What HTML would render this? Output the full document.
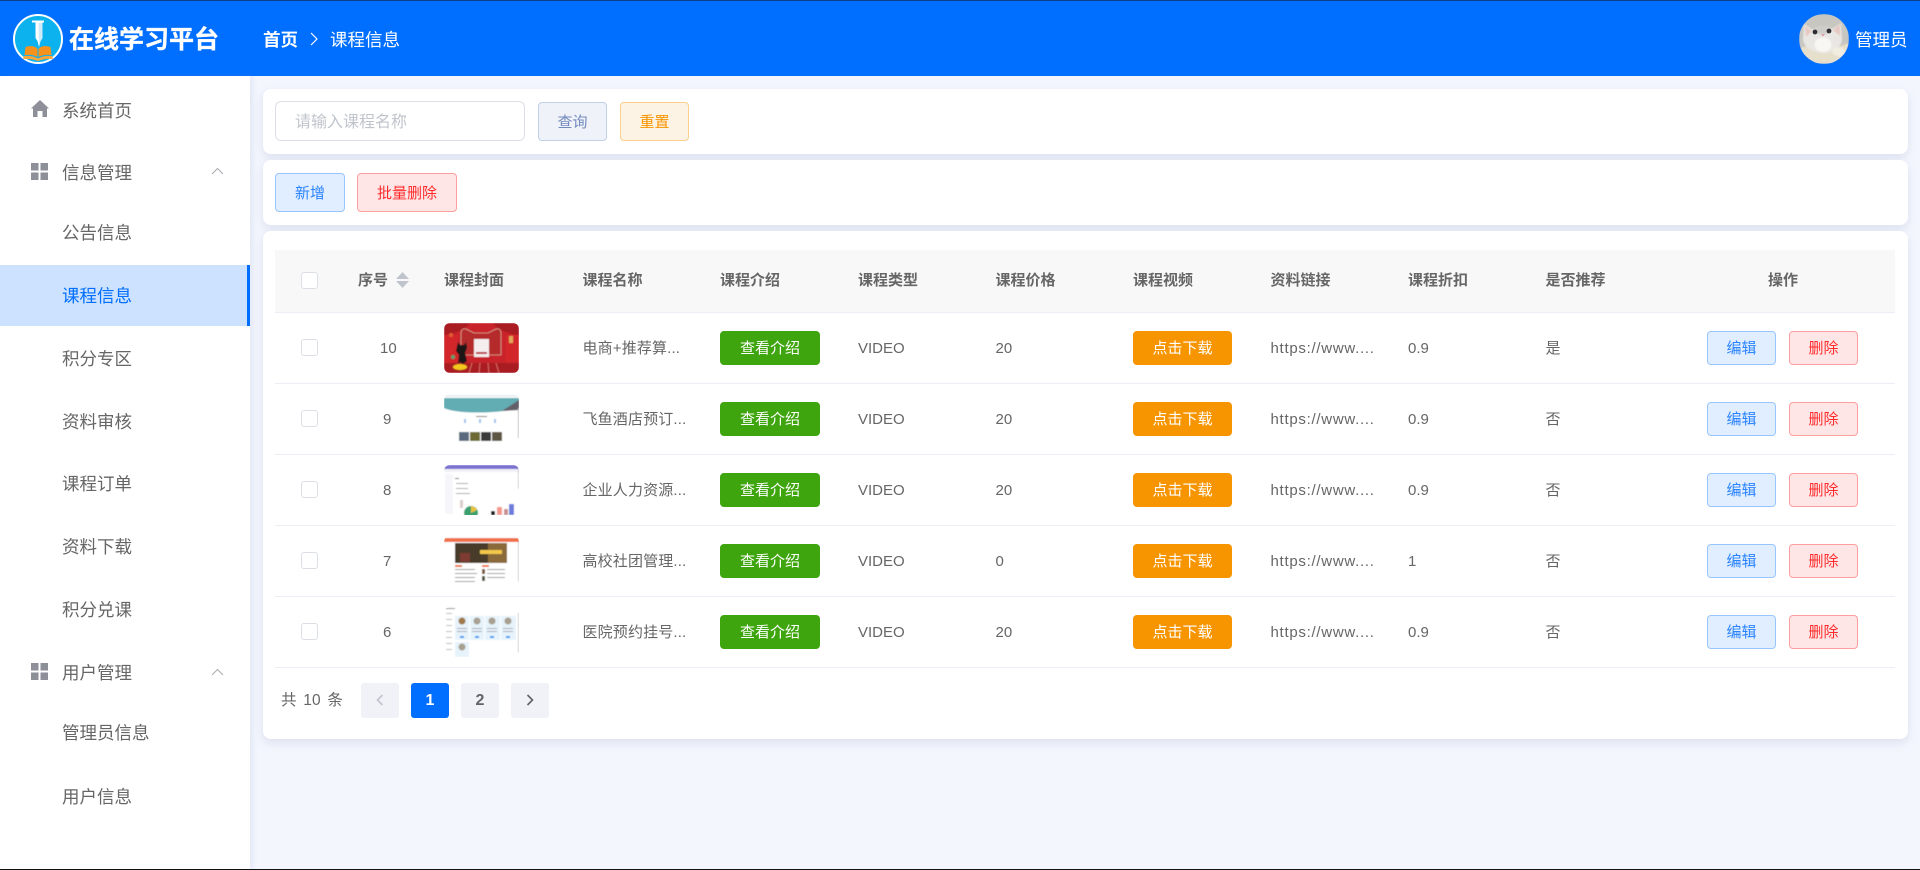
<!DOCTYPE html>
<html lang="zh-CN"><head><meta charset="utf-8"><title>在线学习平台</title>
<style>
*{box-sizing:border-box;margin:0;padding:0}
html,body{width:1920px;height:870px;overflow:hidden;background:#f3f6fd;font-family:"Liberation Sans","Noto Sans CJK SC",sans-serif;color:#606266}
.a{position:absolute;white-space:nowrap}
#hd{position:absolute;left:0;top:0;width:1920px;height:76px;background:#006fff;border-top:1px solid #0b3f86}
#sb{position:absolute;left:0;top:76px;width:250px;height:793px;background:#fff;box-shadow:2px 0 6px rgba(120,130,190,.15)}
.m{position:absolute;left:0;width:250px;height:24px;line-height:26px;font-size:17.5px;color:#666;white-space:nowrap}
.card{position:absolute;left:263px;width:1645px;background:#fff;border-radius:8px;box-shadow:0 4px 10px rgba(110,120,170,.16)}
.btn{position:absolute;text-align:center;border:1px solid;border-radius:4px;font-size:15px;white-space:nowrap}
.th{position:absolute;top:269px;height:24px;line-height:24px;font-size:15px;font-weight:700;color:#666;white-space:nowrap}
.td{position:absolute;height:24px;line-height:26px;font-size:15px;color:#666;white-space:nowrap}
.u{letter-spacing:.72px}
.n{letter-spacing:.15px}
.cb{position:absolute;left:301px;width:17px;height:17px;background:#fff;border:1px solid #dcdfe6;border-radius:3px}
.ln{position:absolute;left:275px;width:1620px;height:1px;background:#ebeef5}
.g{left:720px;width:100px;height:34px;line-height:34px;background:#3fa50e;border-color:#3fa50e;color:#fff}
.o{left:1133px;width:99px;height:34px;line-height:34px;background:#f79500;border-color:#f79500;color:#fff}
.e{left:1707px;width:69px;height:34px;line-height:34px;background:#e1eeff;border-color:#99c5ff;color:#2b84ff}
.d{left:1789px;width:69px;height:34px;line-height:34px;background:#ffe6e6;border-color:#ff9e9e;color:#ff2a2a}
.p{position:absolute;top:683px;width:38px;height:35px;border-radius:3px;background:#f0f2f7;text-align:center;line-height:35px;font-size:16px;font-weight:700;color:#606266}
.t{position:absolute;left:444px;width:75px;height:50px;border-radius:6px;overflow:hidden;display:block}
</style></head><body>

<div id="hd"></div>
<svg class="a" style="left:13px;top:14px" width="50" height="50" viewBox="0 0 50 50">
<circle cx="25" cy="25" r="24" fill="#0cb2ee" stroke="#fff" stroke-width="2"/>
<path d="M19 6.500h12v2h-1.500V24l-2 3-1.500 6-1.500-6-2-3V8.500H19z" fill="#fff"/>
<path d="M25.500 9h4v15l-2 3-1.500 6z" fill="#cfeaf8"/>
<path d="M12.500 33c5-1.500 10-1 12 2v8c-3-2-8-2.500-13-2z" fill="#f5921e"/>
<path d="M37.500 33c-5-1.500-10-1-12 2v8c3-2 8-2.500 13-2z" fill="#f5921e"/>
<path d="M11 42c5-.5 10 0 14 2.500 4-2.500 9-3 14-2.500l1 3c-5-.5-10 0-15 2-5-2-10-2.500-15-2z" fill="#f8a53a"/>
</svg>
<div class="a" style="left:69px;top:22px;height:36px;line-height:36px;font-size:25px;font-weight:700;color:#fff;-webkit-text-stroke:.35px #fff">在线学习平台</div>
<div class="a" style="left:263px;top:27px;height:26px;line-height:26px;font-size:17.5px;font-weight:700;color:#fff">首页</div>
<svg class="a" style="left:309px;top:31px" width="10" height="16" viewBox="0 0 10 16"><path d="M2 2l6 6-6 6" fill="none" stroke="#fff" stroke-width="1.2"/></svg>
<div class="a" style="left:330px;top:27px;height:26px;line-height:26px;font-size:17.5px;color:#fff">课程信息</div>
<svg class="a" style="left:1799px;top:14px;border-radius:50%" width="50" height="50" viewBox="0 0 50 50">
<defs><filter id="bl"><feGaussianBlur stdDeviation=".7"/></filter></defs>
<g filter="url(#bl)"><rect width="50" height="50" fill="#c8c6c0"/>
<path d="M0 34c10-3 24-3 34 1l16-6v21H0z" fill="#e6dfcc"/>
<path d="M4 26L5 10l9 6c6-3 14-3 19-1l9-6 1 17c-2 9-9 13-18 13S6 35 4 26z" fill="#e9e7e3"/>
<path d="M6 12l7 5-6 6zM41 10l-7 6 7 6z" fill="#e6c8c2"/>
<path d="M15 13c5-2 12-2 17 0l-4 7h-9z" fill="#cfcdca"/>
<path d="M16 28c4-6 12-6 16 0 2 6-3 10-8 10s-10-4-8-10z" fill="#f8f7f4"/>
<path d="M33 35l10-2 4 6-6 4-7-3z" fill="#f2ede1"/></g>
<circle cx="16" cy="18" r="2.400" fill="#2e2e34"/><circle cx="30" cy="17" r="2.400" fill="#2e2e34"/>
<path d="M22 20h4l-2 2.500z" fill="#e29aa6"/>
</svg>
<div class="a" style="left:1855px;top:27px;height:26px;line-height:26px;font-size:17.5px;color:#fff">管理员</div>

<div id="sb"></div>
<svg class="a" style="left:31px;top:100px" width="18" height="17" viewBox="0 0 18 17"><path d="M9 0l9 8.500h-2V17h-4.500v-6h-5v6H2V8.500H0z" fill="#8d8f99"/></svg>
<div class="m" style="left:62px;top:98px">系统首页</div>
<svg class="a" style="left:31px;top:163px" width="17" height="17"><rect width="7.500" height="7.500" fill="#8d8f99"/><rect x="9.500" width="7.500" height="7.500" fill="#8d8f99"/><rect y="9.500" width="7.500" height="7.500" fill="#8d8f99"/><rect x="9.500" y="9.500" width="7.500" height="7.500" fill="#8d8f99"/></svg>
<div class="m" style="left:62px;top:160px">信息管理</div>
<svg class="a" style="left:211px;top:167px" width="13" height="8"><path d="M1 7l5.500-5.500L12 7" fill="none" stroke="#a8abb2"/></svg>
<div class="m" style="left:62px;top:220px">公告信息</div>
<div class="a" style="left:0;top:265px;width:250px;height:61px;background:#cce2ff;border-right:3px solid #006fff"></div>
<div class="m" style="left:62px;top:283px;color:#006fff">课程信息</div>
<div class="m" style="left:62px;top:346px">积分专区</div>
<div class="m" style="left:62px;top:409px">资料审核</div>
<div class="m" style="left:62px;top:471px">课程订单</div>
<div class="m" style="left:62px;top:534px">资料下载</div>
<div class="m" style="left:62px;top:597px">积分兑课</div>
<svg class="a" style="left:31px;top:663px" width="17" height="17"><rect width="7.500" height="7.500" fill="#8d8f99"/><rect x="9.500" width="7.500" height="7.500" fill="#8d8f99"/><rect y="9.500" width="7.500" height="7.500" fill="#8d8f99"/><rect x="9.500" y="9.500" width="7.500" height="7.500" fill="#8d8f99"/></svg>
<div class="m" style="left:62px;top:660px">用户管理</div>
<svg class="a" style="left:211px;top:668px" width="13" height="8"><path d="M1 7l5.500-5.500L12 7" fill="none" stroke="#a8abb2"/></svg>
<div class="m" style="left:62px;top:720px">管理员信息</div>
<div class="m" style="left:62px;top:784px">用户信息</div>

<div class="card" style="top:89px;height:65px"></div>
<div class="a" style="left:275px;top:101px;width:250px;height:40px;border:1px solid #dcdfe6;border-radius:6px;background:#fff;line-height:42px;padding-left:19px;font-size:16px;color:#c0c4cc">请输入课程名称</div>
<div class="btn" style="left:538px;top:102px;width:69px;height:39px;line-height:39px;background:#f0f2f9;border-color:#c0d0e8;color:#7189bd">查询</div>
<div class="btn" style="left:620px;top:102px;width:69px;height:39px;line-height:39px;background:#fdf3e4;border-color:#fbd08a;color:#f79500">重置</div>

<div class="card" style="top:160px;height:65px"></div>
<div class="btn" style="left:275px;top:173px;width:70px;height:39px;line-height:39px;background:#e1eeff;border-color:#99c5ff;color:#2b84ff">新增</div>
<div class="btn" style="left:357px;top:173px;width:100px;height:39px;line-height:39px;background:#ffe6e6;border-color:#ff9e9e;color:#ff2a2a">批量删除</div>

<div class="card" style="top:231px;height:508px"></div>
<div class="a" style="left:275px;top:250px;width:1620px;height:62px;background:#f8f8f9"></div>
<div class="cb" style="top:272px"></div>
<div class="th" style="left:358px">序号</div>
<svg class="a" style="left:396px;top:271px" width="13" height="18"><path d="M6.500 1L13 8H0zM6.500 17L0 10h13z" fill="#c0c4cc"/></svg>
<div class="th" style="left:444px">课程封面</div>
<div class="th" style="left:582.500px">课程名称</div>
<div class="th" style="left:720px">课程介绍</div>
<div class="th" style="left:858px">课程类型</div>
<div class="th" style="left:995.500px">课程价格</div>
<div class="th" style="left:1133px">课程视频</div>
<div class="th" style="left:1270.500px">资料链接</div>
<div class="th" style="left:1408px">课程折扣</div>
<div class="th" style="left:1545.500px">是否推荐</div>
<div class="th" style="left:1768px">操作</div>
<div class="ln" style="top:312px"></div><div class="ln" style="top:383px"></div><div class="ln" style="top:454px"></div><div class="ln" style="top:525px"></div><div class="ln" style="top:596px"></div><div class="ln" style="top:667px"></div>

<!-- row 1 -->
<div class="cb" style="top:339px"></div>
<div class="td" style="left:380px;top:336px">10</div>
<svg class="t" style="top:323px" viewBox="0 0 75 50"><defs><filter id="s"><feGaussianBlur stdDeviation=".45"/></filter></defs><g filter="url(#s)"><rect width="75" height="50" fill="#c8222a"/><path d="M0 0h26C22 6 14 10 0 12zM75 0H49c4 6 12 10 26 12z" fill="#a91d22"/><path d="M0 12v28h14V12zM75 12v28H61V12z" fill="#d2282c"/><path d="M17 32V10c0-3 2-5 5-4l8 4h14l8-4c3-1 5 1 5 4v22z" fill="#b52a2c" stroke="#d9a18f" stroke-width=".8"/><rect x="30" y="16" width="15" height="18" fill="#f5eeee"/><rect x="32" y="29" width="11" height="2" fill="#b83038"/><path d="M0 40h75v10H0z" fill="#a81c20"/><path d="M25 50l3-10M35 50l1-10M45 50l-1-10M55 50l-3-10" stroke="#d96a64" stroke-width="1"/><path d="M14 19l2 3h4l2-3 1 6-2 5 2 8-4 3-3-2-2 2 1-9-3-4z" fill="#1d1518"/><ellipse cx="16" cy="44" rx="7" ry="3" fill="#f4c81e"/><circle cx="9" cy="34" r="2" fill="#5aa070"/><circle cx="7" cy="12" r="2" fill="#e65b35"/><rect x="65" y="13" width="4" height="7" fill="#e2a95a"/></g></svg>
<div class="td n" style="left:582.500px;top:336px">电商+推荐算...</div>
<div class="btn g" style="top:331px">查看介绍</div>
<div class="td" style="left:858px;top:336px">VIDEO</div>
<div class="td" style="left:995.500px;top:336px">20</div>
<div class="btn o" style="top:331px">点击下载</div>
<div class="td u" style="left:1270.500px;top:336px">https://www....</div>
<div class="td" style="left:1408px;top:336px">0.9</div>
<div class="td" style="left:1545.500px;top:336px">是</div>
<div class="btn e" style="top:331px">编辑</div>
<div class="btn d" style="top:331px">删除</div>

<!-- row 2 -->
<div class="cb" style="top:410px"></div>
<div class="td" style="left:383px;top:407px">9</div>
<svg class="t" style="top:394px" viewBox="0 0 75 50"><g filter="url(#s)"><rect width="75" height="50" fill="#fff"/><rect y="1" width="75" height="2" fill="#e8eef2"/><path d="M0 4h75v10C60 19 15 21 0 14z" fill="#62acb4"/><path d="M58 17l17-11v10z" fill="#64606a"/><rect x="20" y="25" width="2" height="4" fill="#9cc4ee"/><rect x="35" y="25" width="2" height="4" fill="#9cc4ee"/><rect x="50" y="25" width="2" height="4" fill="#9cc4ee"/><rect x="32" y="22" width="11" height="1" fill="#777"/><rect x="15" y="38" width="10" height="9" fill="#5c6a80"/><rect x="26" y="38" width="10" height="9" fill="#6c6a32"/><rect x="37" y="38" width="10" height="9" fill="#3a3a3a"/><rect x="48" y="38" width="10" height="9" fill="#5e5544"/><rect x="74" y="14" width="1" height="30" fill="#bbb"/></g></svg>
<div class="td n" style="left:582.500px;top:407px">飞鱼酒店预订...</div>
<div class="btn g" style="top:402px">查看介绍</div>
<div class="td" style="left:858px;top:407px">VIDEO</div>
<div class="td" style="left:995.500px;top:407px">20</div>
<div class="btn o" style="top:402px">点击下载</div>
<div class="td u" style="left:1270.500px;top:407px">https://www....</div>
<div class="td" style="left:1408px;top:407px">0.9</div>
<div class="td" style="left:1545.500px;top:407px">否</div>
<div class="btn e" style="top:402px">编辑</div>
<div class="btn d" style="top:402px">删除</div>

<!-- row 3 -->
<div class="cb" style="top:481px"></div>
<div class="td" style="left:383px;top:478px">8</div>
<svg class="t" style="top:465px" viewBox="0 0 75 50"><g filter="url(#s)"><rect width="75" height="50" fill="#fff"/><rect width="75" height="4" fill="#7b72d0"/><rect y="4" width="75" height="3" fill="#f0f0f6"/><rect x="1" y="9" width="8" height="40" fill="#f6f6fa"/><rect x="11" y="13" width="4" height="1" fill="#666"/><rect x="12" y="18" width="12" height="1" fill="#aaa"/><rect x="12" y="23" width="12" height="1" fill="#aaa"/><rect x="12" y="28" width="14" height="1" fill="#aaa"/><circle cx="27" cy="48" r="7" fill="#3aa070"/><path d="M27 48V41a7 7 0 0 1 6 4z" fill="#e9c23c"/><rect x="16" y="35" width="3" height="8" fill="#dcc"/><rect x="47" y="46" width="4" height="4" fill="#222"/><rect x="53" y="42" width="5" height="8" fill="#f5978a"/><rect x="60" y="44" width="4" height="6" fill="#c99090"/><rect x="65" y="39" width="5" height="11" fill="#6e7cdb"/><rect x="74" y="4" width="1" height="20" fill="#ccc"/></g></svg>
<div class="td n" style="left:582.500px;top:478px">企业人力资源...</div>
<div class="btn g" style="top:473px">查看介绍</div>
<div class="td" style="left:858px;top:478px">VIDEO</div>
<div class="td" style="left:995.500px;top:478px">20</div>
<div class="btn o" style="top:473px">点击下载</div>
<div class="td u" style="left:1270.500px;top:478px">https://www....</div>
<div class="td" style="left:1408px;top:478px">0.9</div>
<div class="td" style="left:1545.500px;top:478px">否</div>
<div class="btn e" style="top:473px">编辑</div>
<div class="btn d" style="top:473px">删除</div>

<!-- row 4 -->
<div class="cb" style="top:552px"></div>
<div class="td" style="left:383px;top:549px">7</div>
<svg class="t" style="top:536px" viewBox="0 0 75 50"><g filter="url(#s)"><rect width="75" height="50" fill="#fff"/><rect y="2" width="75" height="4" fill="#f07048"/><rect x="11" y="7" width="52" height="20" fill="#4a3a2c"/><rect x="44" y="7" width="19" height="20" fill="#8a6a3a"/><rect x="16" y="17" width="10" height="9" fill="#7d3a30"/><rect x="36" y="14" width="22" height="4" fill="#f2c74c"/><rect x="11" y="29" width="7" height="2" fill="#ee7040"/><rect x="38" y="29" width="7" height="2" fill="#ee7040"/><rect x="11" y="33" width="20" height="1" fill="#999"/><rect x="11" y="37" width="22" height="1" fill="#999"/><rect x="11" y="41" width="20" height="1" fill="#999"/><rect x="11" y="45" width="20" height="1" fill="#999"/><rect x="38" y="33" width="3" height="5" fill="#7a5a40"/><rect x="38" y="40" width="3" height="5" fill="#554"/><rect x="43" y="33" width="18" height="1" fill="#999"/><rect x="43" y="37" width="18" height="1" fill="#999"/><rect x="43" y="41" width="18" height="1" fill="#999"/><rect x="74" y="6" width="1" height="40" fill="#ccc"/></g></svg>
<div class="td n" style="left:582.500px;top:549px">高校社团管理...</div>
<div class="btn g" style="top:544px">查看介绍</div>
<div class="td" style="left:858px;top:549px">VIDEO</div>
<div class="td" style="left:995.500px;top:549px">0</div>
<div class="btn o" style="top:544px">点击下载</div>
<div class="td u" style="left:1270.500px;top:549px">https://www....</div>
<div class="td" style="left:1408px;top:549px">1</div>
<div class="td" style="left:1545.500px;top:549px">否</div>
<div class="btn e" style="top:544px">编辑</div>
<div class="btn d" style="top:544px">删除</div>

<!-- row 5 -->
<div class="cb" style="top:623px"></div>
<div class="td" style="left:383px;top:620px">6</div>
<svg class="t" style="top:607px" viewBox="0 0 75 50"><g filter="url(#s)"><rect width="75" height="50" fill="#fff"/><rect x="1" y="1" width="10" height="1" fill="#888"/><rect x="2" y="6" width="6" height="1" fill="#bbb"/><rect x="2" y="12" width="6" height="1" fill="#bbb"/><rect x="2" y="18" width="6" height="1" fill="#bbb"/><rect x="2" y="24" width="6" height="1" fill="#bbb"/><rect x="2" y="30" width="6" height="1" fill="#bbb"/><rect x="2" y="36" width="6" height="1" fill="#bbb"/><rect x="2" y="42" width="6" height="1" fill="#bbb"/><g fill="#e6f3fb"><rect x="11" y="9" width="14" height="24"/><rect x="26" y="9" width="14" height="24"/><rect x="41" y="9" width="15" height="24"/><rect x="57" y="9" width="15" height="24"/><rect x="11" y="35" width="14" height="15"/></g><circle cx="18" cy="14" r="3.500" fill="#a0784c"/><circle cx="33" cy="14" r="3.500" fill="#a8a090"/><circle cx="48" cy="14" r="3.500" fill="#a8a090"/><circle cx="64" cy="14" r="3.500" fill="#a8a090"/><circle cx="18" cy="40" r="3.500" fill="#a8a090"/><g fill="#aab"><rect x="13" y="21" width="10" height="1"/><rect x="28" y="21" width="10" height="1"/><rect x="43" y="21" width="10" height="1"/><rect x="59" y="21" width="10" height="1"/><rect x="13" y="24" width="10" height="1"/><rect x="28" y="24" width="10" height="1"/><rect x="43" y="24" width="10" height="1"/><rect x="59" y="24" width="10" height="1"/></g><g fill="#3a9af0"><rect x="16" y="29" width="4" height="2"/><rect x="31" y="29" width="4" height="2"/><rect x="46" y="29" width="4" height="2"/><rect x="62" y="29" width="4" height="2"/></g><rect x="74" y="6" width="1" height="40" fill="#ccc"/></g></svg>
<div class="td n" style="left:582.500px;top:620px">医院预约挂号...</div>
<div class="btn g" style="top:615px">查看介绍</div>
<div class="td" style="left:858px;top:620px">VIDEO</div>
<div class="td" style="left:995.500px;top:620px">20</div>
<div class="btn o" style="top:615px">点击下载</div>
<div class="td u" style="left:1270.500px;top:620px">https://www....</div>
<div class="td" style="left:1408px;top:620px">0.9</div>
<div class="td" style="left:1545.500px;top:620px">否</div>
<div class="btn e" style="top:615px">编辑</div>
<div class="btn d" style="top:615px">删除</div>

<!-- pagination -->
<div class="a" style="left:281px;top:689px;height:24px;line-height:24px;font-size:15.500px;color:#666;word-spacing:2px;letter-spacing:.2px">共 10 条</div>
<div class="p" style="left:361px"><svg width="10" height="14" style="margin-top:10px;display:block;margin-left:14px"><path d="M7.500 2L2.500 7l5 5" fill="none" stroke="#c0c4cc" stroke-width="1.600"/></svg></div>
<div class="p" style="left:411px;background:#006fff;color:#fff">1</div>
<div class="p" style="left:461px">2</div>
<div class="p" style="left:511px"><svg width="10" height="14" style="margin-top:10px;display:block;margin-left:14px"><path d="M2.500 2l5 5-5 5" fill="none" stroke="#606266" stroke-width="1.600"/></svg></div>

<div class="a" style="left:0;top:869px;width:1920px;height:1px;background:#111"></div>
</body></html>
